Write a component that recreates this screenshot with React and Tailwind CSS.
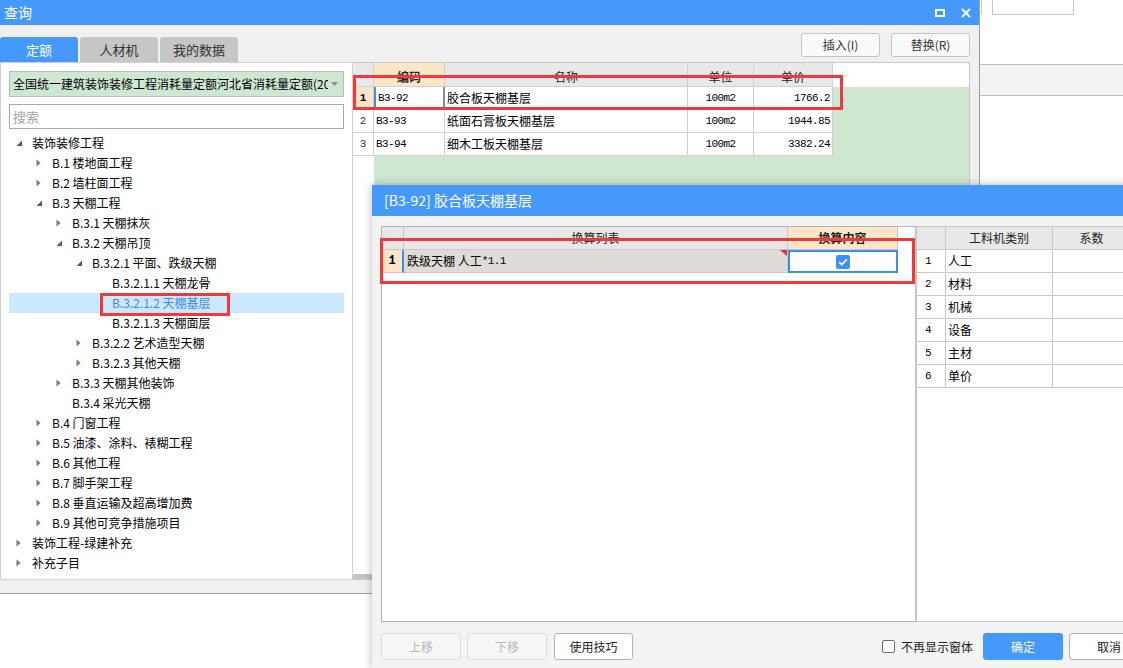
import React from 'react';

const UI = "font-['Microsoft_YaHei','Noto_Sans_CJK_SC',sans-serif]";
const MONO = "font-['Liberation_Mono','Noto_Sans_CJK_SC',monospace]";

const treeRows = [
  { level: 0, label: '装饰装修工程', state: 'open' },
  { level: 1, label: 'B.1 楼地面工程', state: 'closed' },
  { level: 1, label: 'B.2 墙柱面工程', state: 'closed' },
  { level: 1, label: 'B.3 天棚工程', state: 'open' },
  { level: 2, label: 'B.3.1 天棚抹灰', state: 'closed' },
  { level: 2, label: 'B.3.2 天棚吊顶', state: 'open' },
  { level: 3, label: 'B.3.2.1 平面、跌级天棚', state: 'open' },
  { level: 4, label: 'B.3.2.1.1 天棚龙骨' },
  { level: 4, label: 'B.3.2.1.2 天棚基层', selected: true },
  { level: 4, label: 'B.3.2.1.3 天棚面层' },
  { level: 3, label: 'B.3.2.2 艺术造型天棚', state: 'closed' },
  { level: 3, label: 'B.3.2.3 其他天棚', state: 'closed' },
  { level: 2, label: 'B.3.3 天棚其他装饰', state: 'closed' },
  { level: 2, label: 'B.3.4 采光天棚' },
  { level: 1, label: 'B.4 门窗工程', state: 'closed' },
  { level: 1, label: 'B.5 油漆、涂料、裱糊工程', state: 'closed' },
  { level: 1, label: 'B.6 其他工程', state: 'closed' },
  { level: 1, label: 'B.7 脚手架工程', state: 'closed' },
  { level: 1, label: 'B.8 垂直运输及超高增加费', state: 'closed' },
  { level: 1, label: 'B.9 其他可竞争措施项目', state: 'closed' },
  { level: 0, label: '装饰工程-绿建补充', state: 'closed' },
  { level: 0, label: '补充子目', state: 'closed' },
];

const indent = ['pl-[7px]', 'pl-[27px]', 'pl-[47px]', 'pl-[67px]', 'pl-[87px]'];

const quotaRows = [
  { code: 'B3-92', name: '胶合板天棚基层', unit: '100m2', price: '1766.2' },
  { code: 'B3-93', name: '纸面石膏板天棚基层', unit: '100m2', price: '1944.85' },
  { code: 'B3-94', name: '细木工板天棚基层', unit: '100m2', price: '3382.24' },
];

const kinds = ['人工', '材料', '机械', '设备', '主材', '单价'];

const Caret = ({ state }) => (
  <span className="flex w-[16px] shrink-0 items-center">
    {state === 'open' && (
      <svg width="7" height="7" viewBox="0 0 7 7">
        <path d="M6 0.5V6H0.5Z" fill="#595959" />
      </svg>
    )}
    {state === 'closed' && (
      <svg width="5" height="8" viewBox="0 0 5 8">
        <path d="M0.5 0.5L4.5 4L0.5 7.5Z" fill="#7a7a7a" />
      </svg>
    )}
  </span>
);

function Backdrop() {
  return (
    <div className="flex h-full flex-col">
      <div className="flex h-[64px] pl-[981px]">
        <div className="h-[15px] w-[11px] border-l border-[#c8c8c8]" />
        <div className="h-[15px] w-[82px] border-x border-b border-[#c8c8c8]" />
      </div>
      <div className="h-[32px] border-y border-[#bcbcbc] bg-[#f3f3f3]" />
      <div className="flex-1 bg-white" />
    </div>
  );
}

function TreePanel() {
  return (
    <div className="flex w-[353px] flex-col border border-[#d0d0d0] bg-white px-[8px] pt-[8px]">
      <div className="flex h-[26px] items-center border border-[#a9c7ac] bg-[#cee7d2] pl-[3px] pr-[5px]">
        <div className="w-[315px] overflow-hidden whitespace-nowrap text-[12px] text-black">
          全国统一建筑装饰装修工程消耗量定额河北省消耗量定额(2018)
        </div>
        <svg className="ml-auto" width="7" height="4" viewBox="0 0 7 4">
          <path d="M0 0H7L3.5 4Z" fill="#8a8a8a" />
        </svg>
      </div>
      <div className="mt-[7px] flex h-[25px] items-center border border-[#a9a9a9] pl-[3px] text-[13px] text-[#a6a6a6]">
        搜索
      </div>
      <div className="mt-[4px] flex flex-col">
        {treeRows.map((row) => (
          <div
            key={row.label}
            className={`flex h-[20px] items-center text-[12px] ${indent[row.level]} ${
              row.selected ? 'bg-[#cce8ff] text-[#3a8ee6]' : 'text-black'
            }`}
          >
            <Caret state={row.state} />
            <span className="whitespace-nowrap">{row.label}</span>
          </div>
        ))}
      </div>
    </div>
  );
}

function QuotaTable() {
  return (
    <div className="flex w-[617px] flex-col border-y border-r border-[#c8c8c8] bg-white">
      <div className="flex h-[24px] shrink-0 text-[12px] text-[#222]">
        <div className="w-[21px] border-r border-b border-[#d0d0d0] bg-[#e8e8e8]" />
        <div className="flex w-[71px] items-end justify-center border-r border-b border-[#d0d0d0] bg-[#fde5c8] font-bold">编码</div>
        <div className="flex w-[243px] items-end justify-center border-r border-b border-[#d0d0d0] bg-[#e8e8e8]">名称</div>
        <div className="flex w-[66px] items-end justify-center border-r border-b border-[#d0d0d0] bg-[#e8e8e8]">单位</div>
        <div className="flex w-[79px] items-end justify-center border-r border-b border-[#d0d0d0] bg-[#e8e8e8]">单价</div>
      </div>
      <div className="flex flex-1">
        <div className="flex w-[21px] flex-col">
          {quotaRows.map((r, i) => (
            <div
              key={r.code}
              className={`flex h-[23px] items-center justify-center border-r border-b border-[#d0d0d0] text-[11px] ${MONO} ${
                i === 0 ? 'bg-[#fde5c8] font-bold text-black' : 'text-[#333]'
              }`}
            >
              {i + 1}
            </div>
          ))}
        </div>
        <div className="flex flex-1 flex-col bg-[#cde7d2]">
          {quotaRows.map((r, i) => (
            <div key={r.code} className="flex h-[23px] text-black">
              <div
                className={`flex w-[71px] items-center bg-white pl-[2px] text-[11px] tracking-[-0.6px] ${MONO} ${
                  i === 0 ? 'border-l-2 border-r-2 border-b border-l-[#3c8ef0] border-r-[#8a8a8a] border-b-[#d0d0d0]' : 'border-r border-b border-[#d0d0d0]'
                }`}
              >
                {r.code}
              </div>
              <div className="flex w-[243px] items-center border-r border-b border-[#d0d0d0] bg-white pl-[2px] text-[12px]">{r.name}</div>
              <div className={`flex w-[66px] items-center justify-center border-r border-b border-[#d0d0d0] bg-white text-[11px] tracking-[-0.6px] ${MONO}`}>{r.unit}</div>
              <div className={`flex w-[79px] items-center justify-end border-r border-b border-[#d0d0d0] bg-white pr-[2px] text-[11px] tracking-[-0.6px] ${MONO}`}>{r.price}</div>
            </div>
          ))}
        </div>
      </div>
      <div className="flex h-[5px] shrink-0">
        <div className="w-[20px] bg-[#c4c4c4]" />
      </div>
    </div>
  );
}

function QueryWindow() {
  return (
    <div className="absolute left-0 top-0 flex h-[594px] w-[980px] flex-col border-r border-b border-[#a0a0a0] bg-[#f0f0f0]">
      <div className="flex h-[25px] items-center justify-between bg-[#4499fb] pl-[4px] pr-[8px] text-[14px] text-white">
        <span>查询</span>
        <div className="flex items-center gap-[16px]">
          <svg width="10" height="8" viewBox="0 0 10 8">
            <rect x="1" y="1" width="8" height="6" fill="none" stroke="#fff" strokeWidth="2" />
          </svg>
          <svg width="10" height="10" viewBox="0 0 10 10">
            <path d="M1 1L9 9M9 1L1 9" stroke="#fff" strokeWidth="2" />
          </svg>
        </div>
      </div>
      <div className="flex h-[37px] shrink-0 justify-between">
        <div className="flex items-end gap-[2px] text-[13px]">
          <div className="flex h-[25px] w-[78px] items-center justify-center rounded-t-[3px] bg-[#4499fb] text-white">定额</div>
          <div className="flex h-[25px] w-[78px] items-center justify-center rounded-t-[3px] bg-[#c6c6c6] text-[#333]">人材机</div>
          <div className="flex h-[25px] w-[78px] items-center justify-center rounded-t-[3px] bg-[#c6c6c6] text-[#333]">我的数据</div>
        </div>
        <div className="flex gap-[11px] pt-[8px] pr-[9px] text-[12px] text-[#333]">
          <button className="h-[24px] w-[79px] rounded-[3px] border border-[#c4c4c4] bg-[#fafafa]">插入(I)</button>
          <button className="h-[24px] w-[79px] rounded-[3px] border border-[#c4c4c4] bg-[#fafafa]">替换(R)</button>
        </div>
      </div>
      <div className="flex h-[518px] shrink-0">
        <TreePanel />
        <QuotaTable />
      </div>
    </div>
  );
}

function RatioDialog() {
  return (
    <div className="absolute left-[372px] top-[185px] flex h-[483px] w-[786px] flex-col bg-[#f3f3f3] shadow-[0_0_9px_rgba(0,0,0,0.28)]">
      <div className="flex h-[31px] shrink-0 items-center bg-[#4499fb] pl-[12px] text-[14px] text-white">
        [B3-92] 胶合板天棚基层
      </div>
      <div className="flex flex-1 flex-col px-[9px] pt-[10px]">
        <div className="flex h-[396px]">
          <div className="flex w-[536px] flex-col border-y border-l border-r-2 border-[#b4b4b4] border-r-[#c6c6c6] bg-white">
            <div className="flex h-[23px] text-[12px] text-[#222]">
              <div className="w-[22px] border-r border-b border-[#c8c8c8] bg-[#e8e8e8]" />
              <div className="flex w-[384px] items-center justify-center border-r border-b border-[#c8c8c8] bg-[#e8e8e8]">换算列表</div>
              <div className="flex w-[110px] items-center justify-center border-r border-b border-[#c8c8c8] bg-[#fde5c8] font-bold">换算内容</div>
            </div>
            <div className="flex h-[23px]">
              <div className={`flex w-[22px] items-center justify-center border-r-2 border-r-[#3c8ef0] border-b border-b-[#c8c8c8] bg-[#fde5c8] text-[12px] font-bold ${MONO}`}>1</div>
              <div className="relative flex w-[384px] items-center border-r border-b border-[#c8c8c8] bg-[#dfdbd7] pl-[3px] text-[12px] text-black">
                <span>跌级天棚 人工</span>
                <span className={`text-[11px] tracking-[-0.6px] ${MONO}`}>*1.1</span>
                <svg className="absolute right-0 top-0" width="7" height="6" viewBox="0 0 7 6">
                  <path d="M0 0H7V6Z" fill="#e8322f" />
                </svg>
              </div>
              <div className="flex w-[110px] items-center justify-center border-2 border-[#3c8ef0] bg-white">
                <span className="flex h-[14px] w-[14px] items-center justify-center rounded-[2px] bg-[#3d8ff2]">
                  <svg width="10" height="8" viewBox="0 0 10 8">
                    <path d="M1.2 4.2L3.8 6.6L8.8 1.4" fill="none" stroke="#fff" strokeWidth="1.8" />
                  </svg>
                </span>
              </div>
            </div>
          </div>
          <div className="flex flex-1 flex-col border-y border-[#c8c8c8] bg-white">
            <div className="flex h-[23px] shrink-0 text-[12px] text-[#222]">
              <div className="w-[29px] border-r border-b border-[#c8c8c8] bg-[#e8e8e8]" />
              <div className="flex w-[107px] items-center justify-center border-r border-b border-[#c8c8c8] bg-[#e8e8e8]">工料机类别</div>
              <div className="flex w-[78px] items-center justify-center border-r border-b border-[#c8c8c8] bg-[#e8e8e8]">系数</div>
            </div>
            {kinds.map((k, i) => (
              <div key={k} className="flex h-[23px] shrink-0 text-black">
                <div className={`flex w-[29px] items-center border-r border-b border-[#c8c8c8] pl-[8px] text-[11px] ${MONO}`}>{i + 1}</div>
                <div className="flex w-[107px] items-center border-r border-b border-[#c8c8c8] pl-[2px] text-[12px]">{k}</div>
                <div className="w-[78px] border-r border-b border-[#c8c8c8]" />
              </div>
            ))}
          </div>
        </div>
        <div className="mt-[11px] flex h-[27px] items-center text-[12px]">
          <button className="h-[27px] w-[80px] rounded-[3px] border border-[#dcdcdc] bg-[#f6f6f6] text-[#b6b6b6]">上移</button>
          <button className="ml-[6px] h-[27px] w-[80px] rounded-[3px] border border-[#dcdcdc] bg-[#f6f6f6] text-[#b6b6b6]">下移</button>
          <button className="ml-[7px] h-[27px] w-[79px] rounded-[3px] border border-[#b4b4b4] bg-white text-[#222]">使用技巧</button>
          <div className="ml-auto flex items-center">
            <span className="h-[13px] w-[13px] rounded-[2px] border border-[#707070] bg-white" />
            <span className="ml-[6px] text-[#222]">不再显示窗体</span>
            <button className="ml-[10px] h-[27px] w-[80px] rounded-[3px] bg-[#4499fb] text-white">确定</button>
            <button className="ml-[6px] h-[27px] w-[80px] rounded-[3px] border border-[#b4b4b4] bg-white text-[#222]">取消</button>
          </div>
        </div>
      </div>
    </div>
  );
}

export default function App() {
  return (
    <div className={`relative h-[668px] w-[1123px] overflow-hidden bg-white ${UI}`}>
      <Backdrop />
      <QueryWindow />
      <RatioDialog />
      <div className="absolute left-[353px] top-[75px] h-[35px] w-[490px] border-[3px] border-[#f03a3a]" />
      <div className="absolute left-[100px] top-[293px] h-[23px] w-[130px] border-[3px] border-[#f03a3a]" />
      <div className="absolute left-[380px] top-[238px] h-[46px] w-[535px] border-[3px] border-[#f03a3a]" />
    </div>
  );
}
